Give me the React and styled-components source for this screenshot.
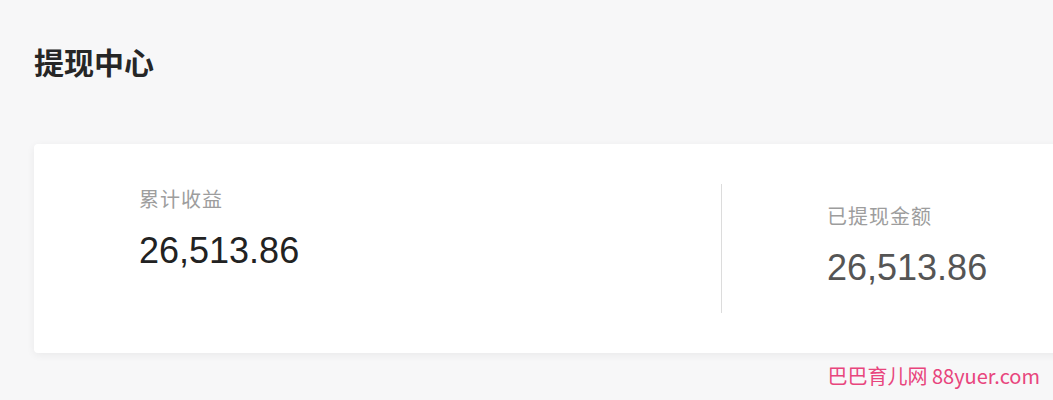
import React from "react";
import styled, { createGlobalStyle } from "styled-components";

const GlobalStyle = createGlobalStyle`
  html, body {
    margin: 0;
    padding: 0;
    background: #f7f7f8;
    overflow: hidden;
    font-family: "Liberation Sans", Arial, "Noto Sans CJK SC", sans-serif;
  }
`;

const Page = styled.main`
  position: relative;
  width: 100%;
  height: 400px;
  padding: 38px 0 0 34px;
  box-sizing: border-box;
`;

const Title = styled.h1`
  margin: 0;
  font-family: "Noto Sans CJK SC", sans-serif;
  font-size: 30px;
  line-height: 46px;
  font-weight: 700;
  color: #262626;
`;

const Card = styled.section`
  margin-top: 60px;
  width: 1060px;
  height: 209px;
  background: #fff;
  border-radius: 4px;
  box-shadow: 0 2px 8px rgba(0, 0, 0, 0.06);
  display: grid;
  grid-template-columns: 687px 1px 1fr;
  align-items: start;
`;

const Stat = styled.div`
  padding: ${({ $top }) => $top}px 0 0 105px;
  display: flex;
  flex-direction: column;
  gap: 19px;
`;

const Label = styled.div`
  font-family: "Noto Sans CJK SC", sans-serif;
  font-size: 20px;
  line-height: 25px;
  color: #9d9d9d;
  letter-spacing: 1px;
`;

const Amount = styled.div`
  font-family: "Liberation Sans", Arial, sans-serif;
  font-size: 36px;
  line-height: 42px;
  color: ${({ $muted }) => ($muted ? "#555" : "#222")};
`;

const Divider = styled.div`
  margin-top: 40px;
  height: 129px;
  background: #dcdcdc;
`;

const Watermark = styled.div`
  position: absolute;
  right: 13px;
  bottom: 12px;
  font-family: "Noto Sans CJK SC", sans-serif;
  font-size: 20px;
  line-height: 24px;
  color: #e8457d;
`;

export default function App() {
  return (
    <>
      <GlobalStyle />
      <Page>
        <Title>提现中心</Title>
        <Card>
          <Stat $top={42}>
            <Label>累计收益</Label>
            <Amount>26,513.86</Amount>
          </Stat>
          <Divider />
          <Stat $top={59}>
            <Label>已提现金额</Label>
            <Amount $muted>26,513.86</Amount>
          </Stat>
        </Card>
        <Watermark>巴巴育儿网 88yuer.com</Watermark>
      </Page>
    </>
  );
}
